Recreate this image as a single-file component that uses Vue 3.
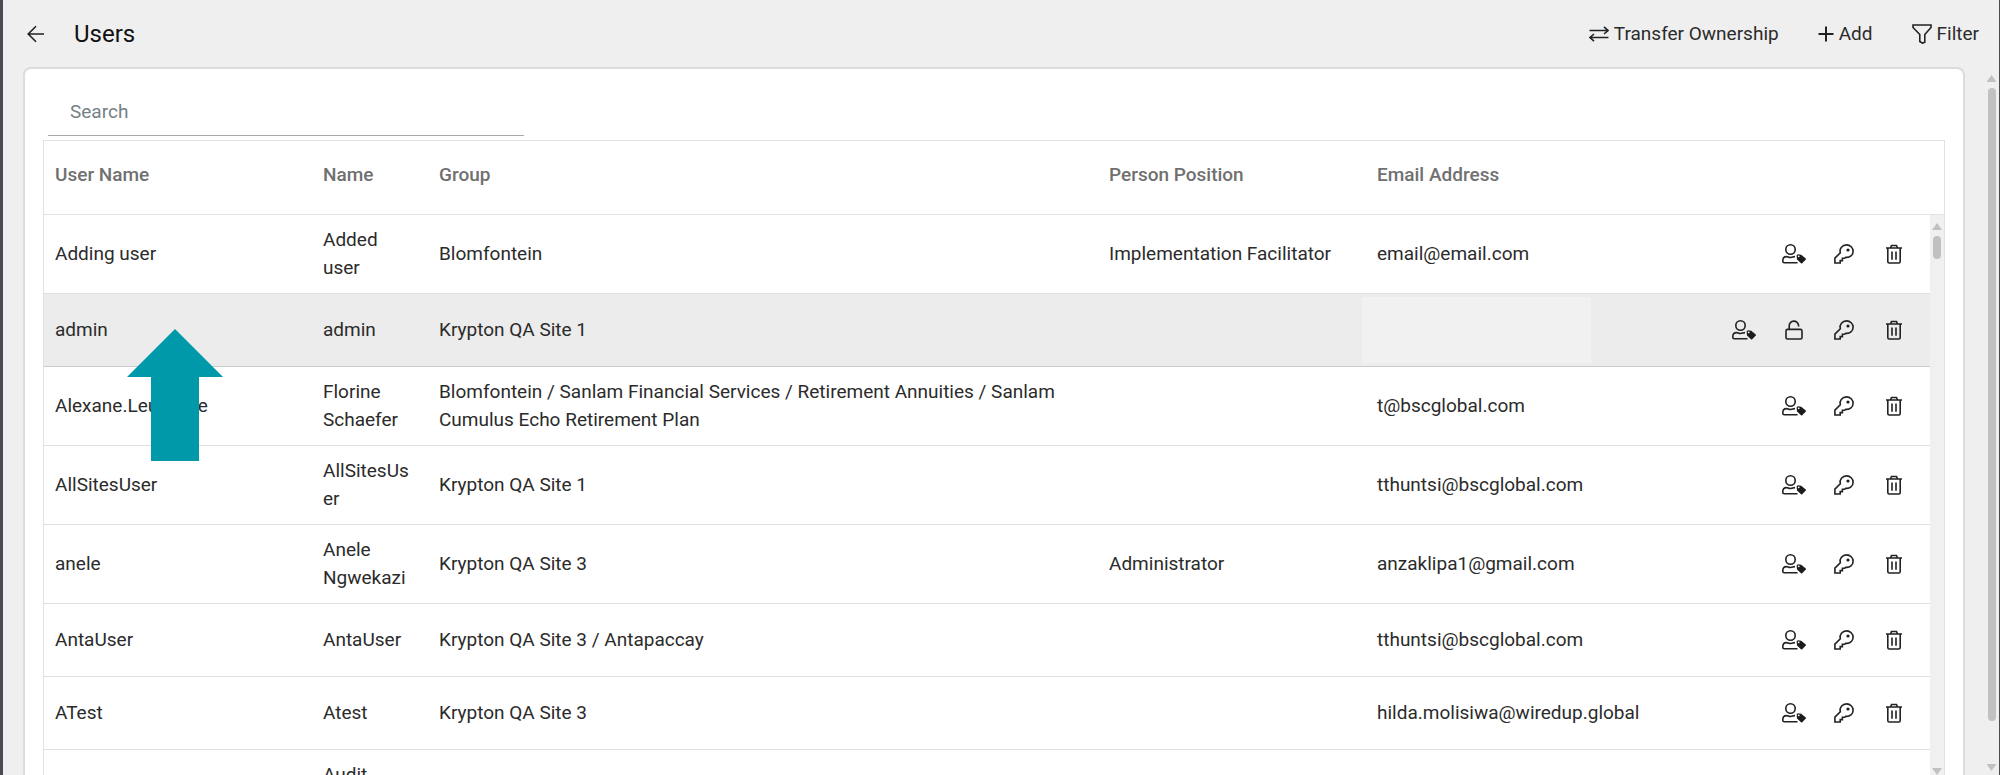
<script setup>
const columns = ['User Name', 'Name', 'Group', 'Person Position', 'Email Address', '']

const users = [
  { user: 'Adding user', name: 'Added user', group: 'Blomfontein', position: 'Implementation Facilitator', email: 'email@email.com' },
  { user: 'admin', name: 'admin', group: 'Krypton QA Site 1', position: '', email: '', selected: true, locked: true },
  { user: 'Alexane.Leuschke', name: 'Florine Schaefer', group: 'Blomfontein / Sanlam Financial Services / Retirement Annuities / Sanlam Cumulus Echo Retirement Plan', position: '', email: 't@bscglobal.com' },
  { user: 'AllSitesUser', name: 'AllSitesUser', group: 'Krypton QA Site 1', position: '', email: 'tthuntsi@bscglobal.com' },
  { user: 'anele', name: 'Anele Ngwekazi', group: 'Krypton QA Site 3', position: 'Administrator', email: 'anzaklipa1@gmail.com' },
  { user: 'AntaUser', name: 'AntaUser', group: 'Krypton QA Site 3 / Antapaccay', position: '', email: 'tthuntsi@bscglobal.com' },
  { user: 'ATest', name: 'Atest', group: 'Krypton QA Site 3', position: '', email: 'hilda.molisiwa@wiredup.global' },
  { user: '', name: 'Audit', group: '', position: '', email: '', tall: true },
]

function actionsFor(u) {
  return u.locked ? ['tag', 'unlock', 'key', 'trash'] : ['tag', 'key', 'trash']
}

const labels = { tag: 'Assign role', unlock: 'Unlock', key: 'Reset password', trash: 'Delete' }
</script>

<template>
  <div class="page">
    <header class="topbar">
      <button class="back" type="button" aria-label="Back">
        <svg width="18" height="18" viewBox="0 0 18 18"><path d="M17 9H1.500M9 1.200 1.200 9 9 16.800" /></svg>
      </button>
      <h1>Users</h1>
      <nav class="tools">
        <button type="button">
          <svg width="20" height="16" viewBox="0 0 20 16"><path d="M0.500 4.500H19M15 0.800 19 4.500 15 8M19.500 11.500H1M5 8 1 11.500 5 15.200" /></svg>
          Transfer Ownership
        </button>
        <button type="button">
          <svg class="bold" width="16" height="16" viewBox="0 0 16 16"><path d="M8 0.500V15.500M0.500 8H15.500" /></svg>
          Add
        </button>
        <button type="button">
          <svg width="20" height="20" viewBox="0 0 20 20"><path d="M1 1H19V3.500L12.800 10.500V18.200L10.500 19.200 7.800 17.500V10.500L1 3.500Z" /></svg>
          Filter
        </button>
      </nav>
    </header>

    <main class="content">
      <section class="card">
        <input class="search" type="text" placeholder="Search" aria-label="Search" />
        <div class="grid">
          <table>
            <thead>
              <tr>
                <th v-for="c in columns" :key="c" scope="col">{{ c }}</th>
              </tr>
            </thead>
            <tbody>
              <tr v-for="u in users" :key="u.name" :class="{ selected: u.selected, tall: u.tall }">
                <td>{{ u.user }}</td>
                <td class="name">{{ u.name }}</td>
                <td>{{ u.group }}</td>
                <td>{{ u.position }}</td>
                <td :class="{ masked: u.selected }">{{ u.email }}</td>
                <td class="actions">
                  <button v-for="a in actionsFor(u)" :key="a" type="button" :aria-label="labels[a]">
                    <svg v-if="a === 'tag'" width="24" height="20" viewBox="0 0 24 20">
                      <circle cx="8.500" cy="5.500" r="4.700" />
                      <path d="M15.500 18.800H2.200Q0.800 18.800 0.800 17.300V16.500Q0.800 12.600 4.500 12.600C6 12.600 6.500 13.500 8.500 13.500C10.500 13.500 11 12.600 13 12.600" />
                      <path class="solid" d="M15.800 10.200L19.200 10.700L23.800 14.600Q24.300 15.100 23.800 15.600L20.200 19.300Q19.600 19.800 19 19.300L15 15.500L14.600 11.500Z" />
                      <circle class="hole" cx="16.700" cy="12.300" r="0.900" />
                    </svg>
                    <svg v-else-if="a === 'unlock'" width="18" height="20" viewBox="0 0 18 20">
                      <rect x="1" y="9.400" width="16" height="9.600" rx="1.500" />
                      <path d="M4.200 9.400V6A4.700 4.700 0 0 1 13.600 5.600V6.500" />
                    </svg>
                    <svg v-else-if="a === 'key'" width="20" height="20" viewBox="0 0 20 20">
                      <path d="M0.900 19V14.200L6.300 8.800C5.200 4.800 8.300 0.900 12.600 0.900C16.200 0.900 19.100 3.700 19.100 7.200C19.100 11 15.800 13.900 11.700 13.300L10.700 14.300H8.400V16.600H6.200V19Z" />
                      <circle class="solid" cx="14" cy="6" r="1.600" />
                    </svg>
                    <svg v-else width="16" height="20" viewBox="0 0 16 20">
                      <path d="M0 4H16M1.800 4V17.500Q1.800 19 3.200 19H12.800Q14.200 19 14.200 17.500V4M4.500 4 5.500 1.500H10.500L11.500 4M6 7.500V15.800M10 7.500V15.800" />
                    </svg>
                  </button>
                </td>
              </tr>
            </tbody>
          </table>
          <div class="bar inner" aria-hidden="true">
            <i class="up"></i>
            <i class="thumb"></i>
            <i class="down"></i>
          </div>
        </div>
      </section>
      <div class="bar outer" aria-hidden="true">
        <i class="up"></i>
        <i class="thumb"></i>
        <i class="down"></i>
      </div>
    </main>

    <svg class="pointer" width="96" height="132" viewBox="0 0 96 132" aria-hidden="true">
      <path d="M48 0 96 48H72V132H24V48H0Z" />
    </svg>
  </div>
</template>

<style>
html,
body {
  margin: 0;
  overflow: hidden;
}
</style>

<style scoped>
* {
  box-sizing: border-box;
}

.page {
  position: relative;
  display: flex;
  flex-direction: column;
  height: 100vh;
  overflow: hidden;
  background: #efefef;
  border-left: 3px solid #4d4b52;
  border-right: 1px solid #4d4b52;
  color: #2b2b2b;
  font-family: Roboto, "Liberation Sans", sans-serif;
  font-size: 19px;
  line-height: 28px;
}

button {
  display: inline-flex;
  align-items: center;
  padding: 0;
  border: 0;
  background: none;
  color: inherit;
  font: inherit;
}

svg {
  display: block;
  fill: none;
  stroke: #222;
  stroke-width: 1.6;
}

.topbar {
  display: flex;
  align-items: center;
  flex: none;
  height: 67px;
  padding: 0 20px 0 24px;
}

h1 {
  margin: 0 0 0 29px;
  color: #111;
  font-size: 24px;
  font-weight: 400;
}

.tools {
  display: flex;
  gap: 39px;
  margin-left: auto;
}

.tools button {
  gap: 5px;
}

.bold {
  stroke-width: 2;
}

.content {
  display: flex;
  flex: 1;
  min-height: 0;
}

.card {
  display: flex;
  flex: 1;
  flex-direction: column;
  min-width: 0;
  margin-left: 20px;
  padding: 20px 18px 0;
  background: #fff;
  border: 2px solid #dcdcdc;
  border-bottom: 0;
  border-radius: 8px 8px 0 0;
}

.search {
  flex: none;
  width: 25%;
  height: 47px;
  margin-left: 5px;
  padding: 0 22px 2px;
  border: 0;
  border-bottom: 1px solid #a8a8a8;
  outline: 0;
  background: none;
  color: #2b2b2b;
  font: inherit;
}

.search::placeholder {
  color: #757f86;
  opacity: 1;
}

.grid {
  position: relative;
  flex: 1;
  min-height: 0;
  margin-top: 4px;
  overflow: hidden;
  border: 1px solid #e2e2e2;
  border-bottom: 0;
}

table,
thead,
tbody {
  display: block;
}

thead {
  padding-right: 14px;
  border-bottom: 1px solid #e2e2e2;
}

tbody {
  margin-right: 14px;
}

tr {
  display: grid;
  grid-template-columns: 267fr 116fr 670fr 268fr 318fr 247fr;
  align-items: center;
  min-height: 73px;
}

tbody tr {
  border-bottom: 1px solid #e0e0e0;
}

th,
td {
  min-width: 0;
  padding: 11px 12px;
  overflow-wrap: anywhere;
  text-align: left;
}

th:first-child,
td:first-child {
  padding-left: 11px;
}

th {
  padding-top: 5px;
  color: #707070;
  font-weight: 500;
}

.selected {
  background: #ececec;
  border-bottom-color: #cbcbcb;
}

.masked {
  align-self: stretch;
  margin: 3px 92px 3px -3px;
  background: #f1f1f1;
}

.tall {
  min-height: 79px;
}

.tall .name {
  align-self: start;
}

.actions {
  display: flex;
  justify-content: flex-end;
  padding: 0 11px 0 0;
}

.actions button {
  justify-content: center;
  width: 50px;
  height: 28px;
}

.solid {
  fill: #1c1c1c;
  stroke: none;
}

.hole {
  fill: #fff;
  stroke: none;
}

.bar {
  display: flex;
  flex-direction: column;
  align-items: center;
}

.bar i {
  flex: none;
  width: 8px;
  background: #c1c1c1;
}

.bar .up,
.bar .down {
  width: 10px;
  height: 7px;
}

.up {
  clip-path: polygon(50% 0, 100% 100%, 0 100%);
}

.down {
  margin-top: auto;
  clip-path: polygon(0 0, 100% 0, 50% 100%);
}

.thumb {
  margin-top: 6px;
  border-radius: 4px;
}

.inner {
  position: absolute;
  top: 74px;
  right: 0;
  bottom: 0;
  width: 14px;
  padding-top: 8px;
  background: #f0f0f0;
}

.inner .thumb {
  height: 23px;
}

.outer {
  width: 15px;
  margin-left: 19px;
  padding: 8px 0 4px;
}

.outer .thumb {
  height: 91%;
}

.pointer {
  position: absolute;
  top: 329px;
  left: 124px;
}

.pointer path {
  fill: #0099a9;
  stroke: none;
}
</style>
